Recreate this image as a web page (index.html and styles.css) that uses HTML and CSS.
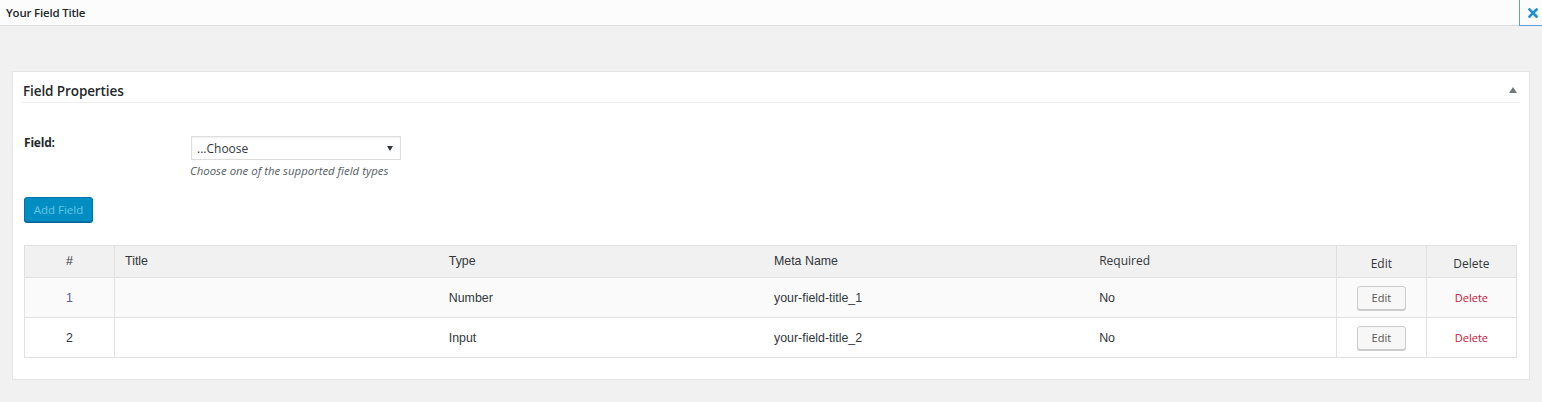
FILE: index.html
```html
<!DOCTYPE html>
<html>
<head>
<meta charset="utf-8">
<link rel="stylesheet" href="styles.css">
</head>
<body>
<div class="topbar">
  <div class="top-title">Your Field Title</div>
  <button class="close" aria-label="Close">
    <svg width="10" height="10" viewBox="0 0 10 10"><path d="M1.5 1.5L8.5 8.5M8.5 1.5L1.5 8.5" stroke="#1e93d0" stroke-width="2.6" stroke-linecap="square"/></svg>
  </button>
</div>
<div class="content">
  <div class="panel">
    <div class="panel-head">
      <h2>Field Properties</h2>
      <span class="toggle"></span>
    </div>
    <div class="panel-body">
      <div class="form-row">
        <label class="form-label">Field:</label>
        <div class="form-field">
          <div class="select"><span>...Choose</span><span class="caret"></span></div>
          <p class="desc">Choose one of the supported field types</p>
        </div>
      </div>
      <button class="btn-primary">Add Field</button>
      <table class="fields">
        <thead>
          <tr>
            <th class="c-num">#</th>
            <th class="c-title">Title</th>
            <th class="c-text">Type</th>
            <th class="c-text">Meta Name</th>
            <th class="c-req">Required</th>
            <th class="c-act">Edit</th>
            <th class="c-act">Delete</th>
          </tr>
        </thead>
        <tbody>
          <tr class="alt">
            <td class="c-num link">1</td>
            <td class="c-title"></td>
            <td class="c-text">Number</td>
            <td class="c-text">your-field-title_1</td>
            <td class="c-req">No</td>
            <td class="c-act"><button class="btn">Edit</button></td>
            <td class="c-act"><a class="del">Delete</a></td>
          </tr>
          <tr>
            <td class="c-num">2</td>
            <td class="c-title"></td>
            <td class="c-text">Input</td>
            <td class="c-text">your-field-title_2</td>
            <td class="c-req">No</td>
            <td class="c-act"><button class="btn">Edit</button></td>
            <td class="c-act"><a class="del">Delete</a></td>
          </tr>
        </tbody>
      </table>
    </div>
  </div>
</div>
</body>
</html>
```
FILE: styles.css
```css
html, body {
  margin: 0;
  padding: 0;
  background: #f1f1f1;
  font-family: "Open Sans", "Noto Sans", sans-serif;
  color: #23282d;
}
.topbar {
  height: 25px;
  background: #fcfcfc;
  border-bottom: 1px solid #dddddd;
  display: flex;
  align-items: center;
  justify-content: space-between;
}
.top-title {
  padding-left: 6px;
  font-size: 11.5px;
  font-weight: 600;
  color: #23282d;
  letter-spacing: -0.2px;
}
.close {
  width: 23px;
  height: 26px;
  margin-bottom: -1px;
  align-self: flex-start;
  background: #fcfcfc;
  border: none;
  border-left: 1px solid #5b9dd9;
  border-bottom: 1px solid #5b9dd9;
  padding: 0 0 0 4px;
  display: flex;
  align-items: center;
  justify-content: center;
}
.content {
  padding: 45px 12px 0 12px;
}
.panel {
  background: #fff;
  border: 1px solid #e5e5e5;
  box-shadow: 0 1px 1px rgba(0,0,0,0.04);
  padding: 0 9px 21px 9px;
}
.panel-head {
  display: flex;
  align-items: center;
  justify-content: space-between;
  padding: 10px 0 2px 1px;
  line-height: 18px;
  border-bottom: 1px solid #eeeeee;
}
.panel-head h2 {
  margin: 0;
  font-size: 13.5px;
  line-height: 18px;
  font-weight: 600;
  color: #23282d;
  letter-spacing: -0.1px;
}
.toggle {
  width: 0;
  height: 0;
  border-left: 4px solid transparent;
  border-right: 4px solid transparent;
  border-bottom: 6px solid #72777c;
  margin-right: 3px;
  margin-top: -2px;
}
.panel-body {
  padding: 0 2px 0 2px;
}
.form-row {
  display: flex;
  margin-top: 33px;
}
.form-label {
  width: 167px;
  font-size: 12px;
  line-height: 14px;
  font-weight: 700;
  color: #23282d;
  padding-top: 0;
  letter-spacing: -0.2px;
}
.select {
  height: 22px;
  border: 1px solid #dddddd;
  box-shadow: inset 0 1px 2px rgba(0,0,0,0.07);
  display: flex;
  align-items: center;
  justify-content: space-between;
  padding: 0 7px 0 5px;
  box-sizing: content-box;
  width: 196px;
  font-size: 12px;
  color: #32373c;
}
.caret {
  width: 0;
  height: 0;
  border-left: 3px solid transparent;
  border-right: 3px solid transparent;
  border-top: 5px solid #32373c;
}
.desc {
  margin: 3px 0 0 -1px;
  font-size: 11.4px;
  font-style: italic;
  color: #555d66;
}
.btn-primary {
  display: block;
  margin-top: 19px;
  height: 25px;
  width: 69px;
  padding: 0;
  background: #008ec2;
  border: 1px solid #0073aa;
  border-radius: 3px;
  color: #66c6e4;
  font-family: "Open Sans", sans-serif;
  font-size: 11.5px;
  box-shadow: 0 1px 0 #006799;
}
.fields {
  margin-top: 23px;
  width: 1493px;
  border-collapse: collapse;
  border: 1px solid #e1e1e1;
  font-family: "Liberation Sans", Arial, sans-serif;
  font-size: 12.4px;
  color: #32373c;
}
.fields th {
  background: #f1f1f1;
  font-weight: 400;
  height: 32px;
  padding: 0 10px;
  border-bottom: 1px solid #e1e1e1;
  vertical-align: top;
  padding-top: 8px;
  box-sizing: border-box;
  text-align: left;
}
.fields td {
  height: 40px;
  padding: 0 10px;
  border-bottom: 1px solid #e1e1e1;
  box-sizing: border-box;
  vertical-align: middle;
}
.fields tr.alt td {
  background: #fafafa;
}
.c-num {
  width: 90px;
  text-align: center !important;
  border-right: 1px solid #e1e1e1;
}
.c-title { width: 324px; }
.c-text { width: 325px; }
.c-req { width: 247px; }
.c-act {
  width: 90px;
  text-align: center !important;
  border-left: 1px solid #e1e1e1;
  font-family: "Open Sans", sans-serif;
}
.fields th.c-act {
  vertical-align: middle;
  padding-top: 3px;
  font-size: 12px;
}
.fields th.c-req { font-family: "Open Sans", sans-serif; font-size: 12px; padding-top: 6px; }
.link { color: #5b5b9f; }
.btn {
  width: 49px;
  height: 24px;
  background: #f7f7f7;
  border: 1px solid #cccccc;
  border-radius: 3px;
  box-shadow: 0 1px 0 #cccccc;
  font-family: "Open Sans", sans-serif;
  font-size: 11px;
  color: #555;
  padding: 0;
}
.del {
  color: #c4143c;
  font-size: 11px;
}
```
